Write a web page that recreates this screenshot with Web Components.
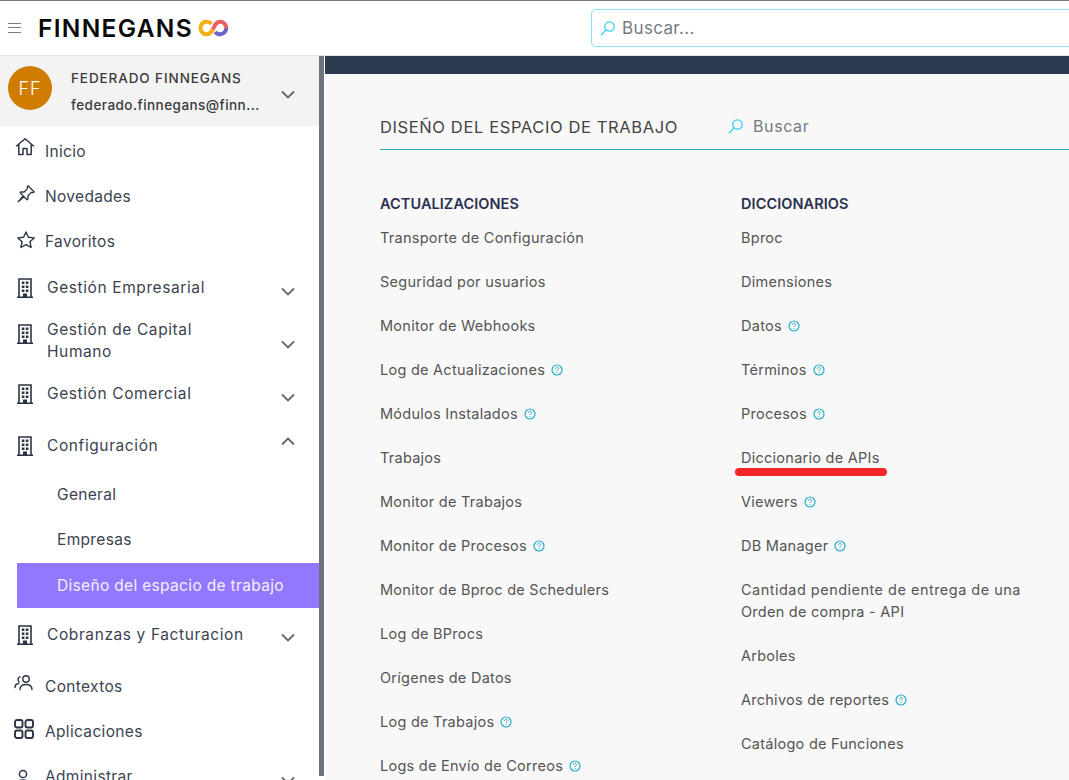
<!DOCTYPE html>
<html lang="es"><head><meta charset="utf-8"><title>Finnegans</title>
<style>
html,body{margin:0;height:780px;overflow:hidden;background:#fff}
body{font-family:Inter,"Liberation Sans",sans-serif}
</style></head><body>
<fin-app></fin-app>
<script>
const ICONS={
home:'<path d="M1.500 9 10 1.800 18.500 9M3.800 8v9.500H8V11.500h4v6h4.200V8" fill="none" stroke="currentColor" stroke-width="1.500" stroke-linejoin="round" stroke-linecap="round"/>',
pin:'<path d="M12 1.800l6.200 6.200-1.300.6-1.600-.2-3.400 3.400.2 3-1 1-3.100-3.100-5.800 5 5-5.800-3.100-3.100 1-1 3 .2 3.400-3.400-.2-1.600z" fill="none" stroke="currentColor" stroke-width="1.300" stroke-linejoin="round"/>',
star:'<path d="M10 2l2.400 5.200 5.800.7-4.300 3.900 1.200 5.700L10 14.700l-5.100 2.800 1.200-5.700L1.800 7.900l5.800-.7z" fill="none" stroke="currentColor" stroke-width="1.400" stroke-linejoin="round"/>',
building:'<path d="M3 19V1h12v18M1 19.200h16" fill="none" stroke="currentColor" stroke-width="1.600"/><path d="M5.800 3.500h2.600V6H5.800zm4 0h2.600V6H9.800zM5.800 7.500h2.600V10H5.800zm4 0h2.600V10H9.800zM5.800 11.500h2.600V14H5.800zm4 0h2.600V14H9.800zM7 15.500h4V19H7z" fill="currentColor"/>',
people:'<circle cx="12" cy="5" r="3.200" fill="none" stroke="currentColor" stroke-width="1.400"/><path d="M6 15.500c0-3.400 2.500-5 6-5s6 1.600 6 5M1 13.500c0-2.500 1.500-3.800 3.800-4M6 2.800a2.800 2.800 0 0 0-.8 5" fill="none" stroke="currentColor" stroke-width="1.400" stroke-linecap="round"/>',
apps:'<g fill="none" stroke="currentColor" stroke-width="1.900"><rect x="1" y="1" width="7.500" height="7.500" rx="2"/><rect x="11.500" y="1" width="7.500" height="7.500" rx="2"/><rect x="1" y="11.500" width="7.500" height="7.500" rx="2"/><rect x="11.500" y="11.500" width="7.500" height="7.500" rx="2"/></g>',
user:'<circle cx="9" cy="5" r="3.600" fill="none" stroke="currentColor" stroke-width="1.500"/><path d="M2.500 17c0-4 2.800-6 6.500-6s6.500 2 6.500 6" fill="none" stroke="currentColor" stroke-width="1.500"/>'
};
const OFF={home:[-1,-5],pin:[0,-3],star:[0,-2],building:[0,0],people:[-2,-3],apps:[-2,-3],user:[-2,2]};
const svg=(n)=>`<svg width="20" height="20" viewBox="0 0 20 20" style="overflow:visible" aria-hidden="true">${ICONS[n]}</svg>`;
const LENS='<svg width="16" height="16" viewBox="0 0 16 16" aria-hidden="true"><circle cx="9.500" cy="6.500" r="4.700" fill="none" stroke="#35cdf3" stroke-width="1.300"/><path d="M6 10 1.300 14.700" stroke="#35cdf3" stroke-width="1.300" stroke-linecap="round"/></svg>';
const CHEV=up=>`<svg width="14" height="9" viewBox="0 0 14 9" aria-hidden="true"><path d="${up?'M1 7.500 7 1.500l6 6':'M1 1.500l6 6 6-6'}" fill="none" stroke="#5f6874" stroke-width="1.800"/></svg>`;

class Base extends HTMLElement{
  constructor(){super();this.attachShadow({mode:'open'});}
  render(h){this.shadowRoot.innerHTML=h;}
}
class FinApp extends Base{connectedCallback(){this.render(`<style>
:host{display:grid;grid-template-rows:56px 724px;height:780px;overflow:hidden}
.body{display:grid;grid-template-columns:325px 1fr;min-height:0;overflow:hidden}
</style><fin-header></fin-header><div class="body"><fin-sidebar></fin-sidebar><fin-main></fin-main></div>`);}}
class FinHeader extends Base{connectedCallback(){this.render(`<style>
:host{display:flex;align-items:center;box-sizing:border-box;height:56px;border-top:1px solid #6d7f80;border-bottom:1px solid #e6e6e6;background:#fff;padding-left:8px}
.burger{width:13px;height:10px;border-top:1px solid #7d7d7d;border-bottom:1px solid #7d7d7d;position:relative;flex:none;box-sizing:border-box;margin-right:17px}
.burger::after{content:"";position:absolute;left:0;right:0;top:3px;height:1px;background:#7d7d7d}
.brand{font:600 24.500px/1 Inter,"Liberation Sans",sans-serif;color:#0a0a0a;letter-spacing:1.300px;width:160px;flex:none}
svg{flex:none}
.search{margin-left:362px;flex:none;width:600px;height:38px;box-sizing:border-box;border:1px solid #86e3fb;border-radius:5px;display:flex;align-items:center;gap:6px;padding-left:8px}
.search span{font:400 17px Inter,"Liberation Sans",sans-serif;color:#757b82;letter-spacing:.35px}
</style><div class="burger"></div><div class="brand">FINNEGANS</div>
<svg width="31" height="20" viewBox="0 0 31 20" aria-hidden="true">
<g fill="none" stroke-width="4">
<path d="M13.500 5.800A6.300 6.300 0 1 0 9 16.300c3.200 0 4.500-2.500 6-5" stroke="#fbae17"/>
<path d="M15 11.300C16.800 7.500 18 3.700 22 3.700a6.300 6.300 0 0 1 6.300 6.300" stroke="#ee5f63"/>
<path d="M28.300 10A6.300 6.300 0 0 1 22 16.300c-2.400 0-3.700-1-4.700-2.500" stroke="#6e64c8"/>
</g></svg>
<div class="search">${LENS}<span>Buscar...</span></div>`);}}
class FinSidebar extends Base{connectedCallback(){this.render(`<style>
:host{display:block;position:relative;overflow:hidden;background:#fff;box-sizing:border-box;font:400 15.500px Inter,"Liberation Sans",sans-serif;color:#3c4350;letter-spacing:.33px}
.user{height:70px;background:#f3f3f3;display:flex;align-items:center;padding-left:8px;padding-right:24px;margin-right:6px;box-sizing:border-box;color:#333;letter-spacing:0}
.av{width:44px;height:44px;border-radius:50%;background:#d07c00;color:#fff;display:flex;align-items:center;justify-content:center;font-size:18px;font-weight:300;flex:none;margin-right:19px;margin-bottom:6px;letter-spacing:1px}
.u{flex:1;min-width:0;font-size:13.500px;line-height:19px;font-weight:500;color:#3a3a3a;margin-top:2px}
.u div:first-child{margin-bottom:8px;letter-spacing:.9px}
.u div:last-child{letter-spacing:.46px}
.chev{display:flex;margin-top:6px}
.scroll{position:absolute;right:1px;top:0;height:720px;width:5px;background:#6c737d}
.list{padding-top:3px;margin-right:6px}
</style>
<div class="user"><div class="av">FF</div><div class="u"><div>FEDERADO FINNEGANS</div><div>federado.finnegans@finn...</div></div><span class="chev">${CHEV(false)}</span></div>
<div class="scroll"></div>
<div class="list">
<fin-nav icon="home" h="45">Inicio</fin-nav>
<fin-nav icon="pin" h="45">Novedades</fin-nav>
<fin-nav icon="star" h="45">Favoritos</fin-nav>
<fin-nav icon="building" h="47" chev="down">Gestión Empresarial</fin-nav>
<fin-nav icon="building" up h="59" chev="down">Gestión de Capital<br>Humano</fin-nav>
<fin-nav icon="building" h="47" chev="down">Gestión Comercial</fin-nav>
<fin-nav icon="building" h="55" chev="up" style="padding-top:2px">Configuración</fin-nav>
<fin-nav sub h="45">General</fin-nav>
<fin-nav sub h="46">Empresas</fin-nav>
<fin-nav sub active h="45">Diseño del espacio de trabajo</fin-nav>
<fin-nav icon="building" h="52" chev="down" style="padding-top:1px">Cobranzas y Facturacion</fin-nav>
<fin-nav icon="people" h="45" style="margin-top:4px">Contextos</fin-nav>
<fin-nav icon="apps" h="45">Aplicaciones</fin-nav>
<fin-nav icon="user" h="45" chev="down">Administrar</fin-nav>
</div>`);}}
class FinNav extends Base{connectedCallback(){
  const ic=this.getAttribute('icon'),ch=this.getAttribute('chev'),sub=this.hasAttribute('sub'),act=this.hasAttribute('active');
  const b=ic==='building';
  const o=OFF[ic]||[0,0];
  const up=this.hasAttribute('up')?-7:0;
  this.render(`<style>
:host{display:flex;align-items:center;height:${this.getAttribute('h')}px;box-sizing:border-box;position:relative;
 ${sub?`margin-left:17px;padding-left:40px;`:`padding-left:16px;`}
 ${act?'background:#9378ff;color:#f2efff;':''}
 ${b?'letter-spacing:.6px;':''}}
.i{width:20px;height:20px;flex:none;margin-right:${b?11:9}px;color:#2b3444;display:flex;transform:translate(${o[0]}px,${o[1]+up}px)}
.t{line-height:22px;flex:1}
.c{position:absolute;right:24px;top:50%;margin-top:${ch==='up'?-8:-1}px;display:flex}
</style>${ic?`<span class="i">${svg(ic)}</span>`:''}<span class="t"><slot></slot></span>${ch?`<span class="c">${CHEV(ch==='up')}</span>`:''}`);}}
class FinMain extends Base{connectedCallback(){
const c1=[['Transporte de Configuración'],['Seguridad por usuarios'],['Monitor de Webhooks'],['Log de Actualizaciones',1],['Módulos Instalados',1],['Trabajos'],['Monitor de Trabajos'],['Monitor de Procesos',1],['Monitor de Bproc de Schedulers'],['Log de BProcs'],['Orígenes de Datos'],['Log de Trabajos',1],['Logs de Envío de Correos',1]];
const c2=[['Bproc'],['Dimensiones'],['Datos',1],['Términos',1],['Procesos',1],['Diccionario de APIs',0,1],['Viewers',1],['DB Manager',1],['<span style="letter-spacing:.48px">Cantidad pendiente de entrega de una</span><br>Orden de compra - API'],['Arboles'],['Archivos de reportes',1],['Catálogo de Funciones']];
const links=l=>l.map(([t,q,m])=>`<fin-link${q?' help':''}${m?' mark':''}>${t}</fin-link>`).join('');
this.render(`<style>
:host{display:block;background:#f8f8f8;overflow:hidden;min-height:0}
.band{height:18px;background:#2d3b50}
.wrap{padding:30px 0 0 55px}
.head{display:flex;align-items:center;height:46px;box-sizing:border-box;border-bottom:1px solid #2bacc9;padding-top:1px}
.title{font:400 16.500px Inter,"Liberation Sans",sans-serif;color:#444;width:348px;flex:none;letter-spacing:.62px}
.head svg{margin-right:9px;flex:none;margin-top:-2px}
.s{font:400 16px Inter,"Liberation Sans",sans-serif;color:#757b82;letter-spacing:.6px;margin-top:-2px}
.cols{display:grid;grid-template-columns:361px 1fr;padding-top:42px}
</style><div class="band"></div><div class="wrap"><div class="head"><div class="title">DISEÑO DEL ESPACIO DE TRABAJO</div>${LENS}<div class="s">Buscar</div></div>
<div class="cols"><fin-col><h3 slot="h">ACTUALIZACIONES</h3>${links(c1)}</fin-col><fin-col><h3 slot="h">DICCIONARIOS</h3>${links(c2)}</fin-col></div></div>`);}}
class FinCol extends Base{connectedCallback(){this.render(`<style>
:host{display:block}
::slotted(h3){margin:0 0 11px;font:600 14.500px/24px Inter,"Liberation Sans",sans-serif;color:#2b3050;letter-spacing:.07px}
</style><slot name="h"></slot><slot></slot>`);}}
class FinLink extends Base{connectedCallback(){
 const help=this.hasAttribute('help'),mark=this.hasAttribute('mark');
 this.render(`<style>
:host{display:block;padding-bottom:22px;font:400 14.500px/22px Inter,"Liberation Sans",sans-serif;color:#555;position:relative;letter-spacing:.26px}
.q{display:inline-flex;vertical-align:-1px;margin-left:6px}
.m{position:absolute;left:-6px;top:21px;width:152px;height:8px;border-radius:4px;background:#f2262b}
</style><slot></slot>${help?`<span class="q"><svg width="12" height="12" viewBox="0 0 12 12" aria-hidden="true"><circle cx="6" cy="6" r="5" fill="none" stroke="#2bacc9" stroke-width="1.200"/><path d="M4.500 4.800c0-2 3-2 3-.2 0 1-1.500 1-1.500 2.200" fill="none" stroke="#2bacc9" stroke-width="1"/><circle cx="6" cy="8.500" r=".6" fill="#2bacc9"/></svg></span>`:''}${mark?'<span class="m"></span>':''}`);}}
customElements.define('fin-app',FinApp);customElements.define('fin-header',FinHeader);customElements.define('fin-sidebar',FinSidebar);customElements.define('fin-nav',FinNav);customElements.define('fin-main',FinMain);customElements.define('fin-col',FinCol);customElements.define('fin-link',FinLink);
</script></body></html>
